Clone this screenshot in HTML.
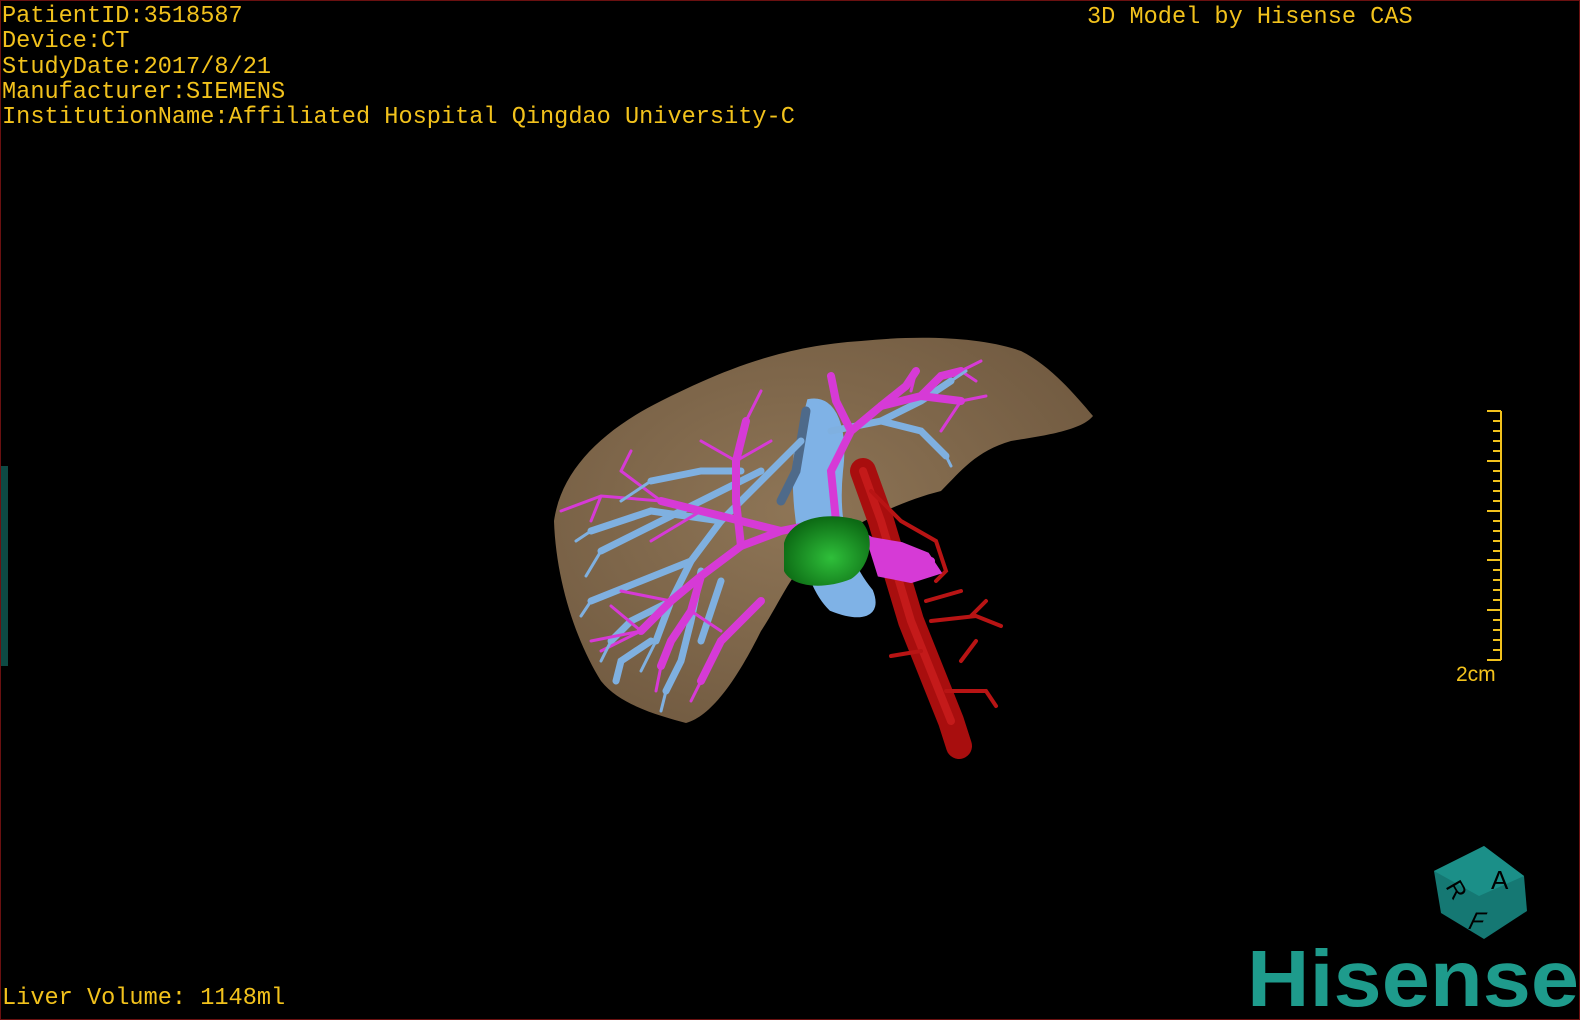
<!DOCTYPE html>
<html><head><meta charset="utf-8"><style>
html,body{margin:0;padding:0;background:#000;}
#w{position:relative;width:1580px;height:1020px;background:#000;overflow:hidden;box-sizing:border-box;border:1px solid #6a1010;}
.t{position:absolute;color:#f2c21c;font-family:"Liberation Mono",monospace;font-size:23.6px;line-height:25.3px;white-space:pre;letter-spacing:0;}
</style></head><body><div id="w">
<div class="t" style="left:1px;top:3px;">PatientID:3518587
Device:CT
StudyDate:2017/8/21
Manufacturer:SIEMENS
InstitutionName:Affiliated Hospital Qingdao University-C</div>
<div class="t" style="left:1086px;top:4px;">3D Model by Hisense CAS</div>
<div class="t" style="left:1px;top:985px;">Liver Volume: 1148ml</div>
<div style="position:absolute;left:0;top:465px;width:7px;height:200px;background:#0d4a44;"></div>
<svg width="1580" height="1020" style="position:absolute;left:0;top:0" viewBox="0 0 1580 1020">
<defs>
<radialGradient id="lv" cx="0.45" cy="0.45" r="0.6"><stop offset="0" stop-color="#8e7556"/><stop offset="1" stop-color="#735c42"/></radialGradient>
<radialGradient id="gb" cx="0.55" cy="0.6" r="0.6"><stop offset="0" stop-color="#2fbf3a"/><stop offset="1" stop-color="#0c6a14"/></radialGradient>
</defs>
<path d="M553,520 C560,470 600,430 660,400 C720,370 780,345 860,340 C920,334 980,336 1020,350 C1050,365 1075,395 1092,415 C1080,430 1040,435 1010,440 C975,450 960,470 940,490 C900,500 860,520 820,545 C790,570 780,600 760,630 C735,680 710,715 685,722 C660,715 620,705 600,680 C575,640 555,580 553,520Z" fill="url(#lv)"/>
<g fill="none" stroke-linecap="round">
<path d="M808,400 C835,395 845,430 840,470 C835,520 845,560 870,590 C880,615 860,620 830,608 C800,580 790,500 795,450 Z" fill="#7fb2e6" stroke="#7fb2e6" stroke-width="4"/>
<path d="M805,410 L795,470 L780,500" stroke="#4e6a8a" stroke-width="9"/>
<g stroke="#7fb0e0" stroke-width="7">
<path d="M800,440 L760,480 L720,520 L690,560 L670,600 L655,640"/>
<path d="M760,470 L700,500 L640,530 L600,550"/>
<path d="M720,520 L650,510 L590,530"/>
<path d="M690,560 L640,580 L590,600"/>
<path d="M670,600 L630,620 L610,640"/>
<path d="M700,570 L690,620 L680,660 L665,690"/>
<path d="M720,580 L700,640"/>
<path d="M830,430 L880,420 L920,400 L950,380"/>
<path d="M880,420 L920,430 L945,455"/>
<path d="M740,470 L700,470 L650,480"/>
<path d="M650,640 L620,660 L615,680"/>
</g>
<g stroke="#d63ad6" stroke-width="8">
<path d="M930,560 L870,540 L835,520 L830,470 L850,430 L880,405 L920,395 L960,400"/>
<path d="M830,520 L780,530 L740,545 L700,575 L670,600 L640,630"/>
<path d="M780,530 L740,520 L700,510 L660,500"/>
<path d="M740,545 L735,500 L735,460 L745,420"/>
<path d="M700,575 L690,610 L670,640 L660,665"/>
<path d="M850,430 L835,400 L830,375"/>
<path d="M920,395 L940,375 L960,370"/>
<path d="M880,405 L905,385 L915,370"/>
<path d="M760,600 L720,640 L700,680"/>
</g>
<g stroke="#d63ad6" stroke-width="3">
<path d="M660,500 L600,495 M660,500 L620,470 M735,460 L700,440 M745,420 L760,390 M735,460 L770,440 M640,630 L600,650 M640,630 L610,605 M660,665 L655,690 M690,610 L720,630 M960,400 L985,395 M960,370 L975,380 M915,370 L910,390 M700,510 L650,540 M670,600 L620,590 M600,495 L590,520 M620,470 L630,450 M960,400 L940,430 M960,370 L980,360 M600,495 L560,510 M640,630 L590,640 M700,680 L690,700"/>
</g>
<g stroke="#7fb0e0" stroke-width="3">
<path d="M600,550 L585,575 M590,530 L575,540 M590,600 L580,615 M610,640 L600,660 M655,640 L640,670 M665,690 L660,710 M950,380 L965,370 M945,455 L950,465 M650,480 L620,500"/>
</g>
<path d="M862,470 L880,520 L895,570 L910,620 L930,670 L950,720 L958,745" stroke="#a80e0e" stroke-width="26"/>
<path d="M862,470 L880,520 L895,570 L910,620 L930,670 L950,720" stroke="#c41a1a" stroke-width="8"/>
<path d="M870,490 L900,520 L935,540 L945,570 L935,580 M930,620 L975,615 L1000,625 M920,650 L890,655 M945,690 L985,690 M960,660 L975,640 M925,600 L960,590 M970,615 L985,600 M985,690 L995,705" stroke="#b81414" stroke-width="4"/>
<path d="M870,540 L900,545 L925,555 L935,570 L910,578 L880,572 Z" fill="#d63ad6" stroke="#d63ad6" stroke-width="8"/>
</g>
<path d="M783,542 C790,515 830,510 860,520 C875,535 870,565 850,578 C820,590 790,585 783,570Z" fill="url(#gb)"/>
<g transform="translate(1478,890)">
<polygon points="-45,-20 5,-45 45,-15 48,20 5,48 -38,22" fill="#157873"/>
<polygon points="-45,-20 5,-45 45,-15 0,5" fill="#1b8f88"/>
<text x="12" y="-2" font-family="Liberation Sans,sans-serif" font-size="26" fill="#000">A</text>
<text x="-32" y="8" font-family="Liberation Sans,sans-serif" font-size="24" fill="#000" transform="rotate(60 -22 0)">R</text>
<text x="5" y="38" font-family="Liberation Sans,sans-serif" font-size="24" fill="#000" transform="skewX(-25)">F</text>
</g>
<text x="1246" y="1005" font-family="Liberation Sans,sans-serif" font-weight="bold" font-size="80" fill="#1e9b8c" textLength="332" lengthAdjust="spacingAndGlyphs">Hisense</text>
<g stroke="#f2c21c" stroke-width="2">
<path d="M1500,410 L1500,659 M1486,410 L1500,410 M1486,659 L1500,659"/>
<path d="M1486,460 L1500,460 M1486,510 L1500,510 M1486,559 L1500,559 M1486,609 L1500,609"/>
<path d="M1492,420 L1500,420 M1492,430 L1500,430 M1492,440 L1500,440 M1492,450 L1500,450 M1492,470 L1500,470 M1492,480 L1500,480 M1492,490 L1500,490 M1492,500 L1500,500 M1492,520 L1500,520 M1492,530 L1500,530 M1492,540 L1500,540 M1492,550 L1500,550 M1492,569 L1500,569 M1492,579 L1500,579 M1492,589 L1500,589 M1492,599 L1500,599 M1492,619 L1500,619 M1492,629 L1500,629 M1492,639 L1500,639 M1492,649 L1500,649"/>
</g>
<text x="1455" y="680" font-family="Liberation Sans,sans-serif" font-size="21" fill="#f2c21c">2cm</text>
</svg>
</div></body></html>
